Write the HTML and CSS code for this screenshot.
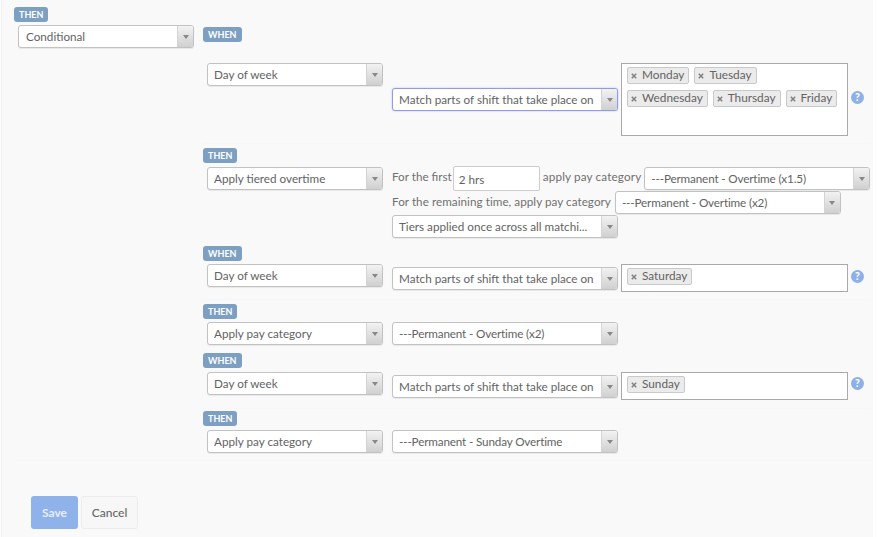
FILE: index.html
```html
<!DOCTYPE html>
<html lang="en">
<head>
<meta charset="utf-8">
<title>Rule editor</title>
<link rel="stylesheet" href="styles.css">
</head>
<body>
<main class="page">
  <div class="tree">
    <div class="root-col">
      <span class="tag tag-root">THEN</span>
      <div class="select w-root"><span class="select-text">Conditional</span><span class="select-btn"><i class="caret"></i></span></div>
    </div>
    <div class="branches">
      <span class="tag tag-first">WHEN</span>

      <div class="row row-1">
        <div class="select w-field"><span class="select-text">Day of week</span><span class="select-btn"><i class="caret"></i></span></div>
        <div class="select w-value focused mid-1"><span class="select-text">Match parts of shift that take place on</span><span class="select-btn"><i class="caret"></i></span></div>
        <div class="tagbox tall">
          <div class="chip-line">
            <span class="chip"><svg class="x" viewBox="0 0 6 6"><path d="M.8.8l4.4 4.4M5.200.8L.8 5.200"/></svg>Monday</span>
            <span class="chip"><svg class="x" viewBox="0 0 6 6"><path d="M.8.8l4.4 4.4M5.200.8L.8 5.200"/></svg>Tuesday</span>
          </div>
          <div class="chip-line">
            <span class="chip"><svg class="x" viewBox="0 0 6 6"><path d="M.8.8l4.4 4.4M5.200.8L.8 5.200"/></svg>Wednesday</span>
            <span class="chip"><svg class="x" viewBox="0 0 6 6"><path d="M.8.8l4.4 4.4M5.200.8L.8 5.200"/></svg>Thursday</span>
            <span class="chip"><svg class="x" viewBox="0 0 6 6"><path d="M.8.8l4.4 4.4M5.200.8L.8 5.200"/></svg>Friday</span>
          </div>
        </div>
        <span class="help help-1">?</span>
      </div>

      <hr class="sep sep-1">
      <span class="tag tag-then-1">THEN</span>
      <div class="row row-tier">
        <div class="select w-field"><span class="select-text">Apply tiered overtime</span><span class="select-btn"><i class="caret"></i></span></div>
        <div class="tier">
          <div class="tier-line line-1">
            <span class="lbl lbl-first">For the first</span>
            <span class="input">2 hrs</span>
            <span class="lbl lbl-apply">apply pay category</span>
            <div class="select w-value"><span class="select-text perm">---Permanent - Overtime (x1.5)</span><span class="select-btn"><i class="caret"></i></span></div>
          </div>
          <div class="tier-line line-2">
            <span class="lbl lbl-rest">For the remaining time, apply pay category</span>
            <div class="select w-value"><span class="select-text perm">---Permanent - Overtime (x2)</span><span class="select-btn"><i class="caret"></i></span></div>
          </div>
          <div class="select w-value"><span class="select-text">Tiers applied once across all matchi...</span><span class="select-btn"><i class="caret"></i></span></div>
        </div>
      </div>

      <span class="tag tag-when-2">WHEN</span>
      <div class="row">
        <div class="select w-field"><span class="select-text">Day of week</span><span class="select-btn"><i class="caret"></i></span></div>
        <div class="select w-value mid-2"><span class="select-text">Match parts of shift that take place on</span><span class="select-btn"><i class="caret"></i></span></div>
        <div class="tagbox"><span class="chip"><svg class="x" viewBox="0 0 6 6"><path d="M.8.8l4.4 4.4M5.200.8L.8 5.200"/></svg>Saturday</span></div>
        <span class="help help-2">?</span>
      </div>

      <hr class="sep sep-1">
      <span class="tag tag-then-2">THEN</span>
      <div class="row">
        <div class="select w-field"><span class="select-text">Apply pay category</span><span class="select-btn"><i class="caret"></i></span></div>
        <div class="select w-value"><span class="select-text perm">---Permanent - Overtime (x2)</span><span class="select-btn"><i class="caret"></i></span></div>
      </div>

      <span class="tag tag-when-3">WHEN</span>
      <div class="row">
        <div class="select w-field"><span class="select-text">Day of week</span><span class="select-btn"><i class="caret"></i></span></div>
        <div class="select w-value mid-2"><span class="select-text">Match parts of shift that take place on</span><span class="select-btn"><i class="caret"></i></span></div>
        <div class="tagbox"><span class="chip"><svg class="x" viewBox="0 0 6 6"><path d="M.8.8l4.4 4.4M5.200.8L.8 5.200"/></svg>Sunday</span></div>
        <span class="help help-3">?</span>
      </div>

      <hr class="sep sep-3">
      <span class="tag tag-then-3">THEN</span>
      <div class="row">
        <div class="select w-field"><span class="select-text">Apply pay category</span><span class="select-btn"><i class="caret"></i></span></div>
        <div class="select w-value"><span class="select-text perm">---Permanent - Sunday Overtime</span><span class="select-btn"><i class="caret"></i></span></div>
      </div>
    </div>
  </div>
  <div class="actions">
    <button class="btn btn-save" type="button">Save</button>
    <button class="btn btn-cancel" type="button">Cancel</button>
  </div>
</main>
</body>
</html>
```
FILE: styles.css
```css
* { box-sizing: border-box; }
html, body { margin: 0; height: 100%; }
body {
  background: #fff;
  color: #636363;
  font-family: Lato, "Liberation Sans", sans-serif;
  font-size: 11.7px;
  overflow: hidden;
}
.page {
  height: 537px;
  margin-left: 1px;
  margin-right: 5px;
  background: #f9f9f9;
  border-left: 1px solid #f0f0f0;
  padding: 7px 0 0 12px;
}
.tree { display: flex; padding-bottom: 7px; border-bottom: 1px solid #f7f7f7; }
.root-col { width: 189px; flex: none; }
.branches { padding-top: 20px; display: flex; flex-direction: column; align-items: flex-start; }

.sep { align-self: stretch; height: 1px; margin: 0; border: 0; background: #f7f7f7; }
.sep-1 { margin-top: 7px; }
.sep-3 { margin-top: 8px; }

.tag {
  display: block;
  width: max-content;
  height: 15px;
  padding: 0 5px;
  border-radius: 3px;
  background: #7c9fc2;
  color: #fff;
  font-size: 9px;
  font-weight: 700;
  line-height: 15px;
}
.tag-root { margin-bottom: 3px; }
.tag-first { margin-bottom: 21px; }
.tag-then-1 { margin-top: 4px; margin-bottom: 3px; }
.tag-when-2 { margin-top: 8px; margin-bottom: 3px; }
.tag-then-2 { margin-top: 4px; margin-bottom: 3px; }
.tag-when-3 { margin-top: 8px; margin-bottom: 4px; }
.tag-then-3 { margin-top: 2px; margin-bottom: 4px; }

.row { display: flex; align-items: flex-start; margin-left: 4px; }
.row-1 { height: 73px; }
.row-tier .w-field { margin-top: 1px; }

.select {
  display: flex;
  height: 23px;
  flex: none;
  background: #fff;
  border: 1px solid #c2c2c2;
  border-radius: 3px;
  box-shadow: 0 1px 1px rgba(0, 0, 0, .07);
}
.select-text {
  flex: 1;
  padding-left: 6px;
  line-height: 21px;
  white-space: nowrap;
  overflow: hidden;
}
.perm { letter-spacing: -.15px; }
.select-btn {
  width: 16px;
  flex: none;
  display: flex;
  align-items: center;
  justify-content: center;
  border-left: 1px solid #d4d4d4;
  background: linear-gradient(#f2f2f2, #d0d0d0);
  border-radius: 0 2px 2px 0;
}
.caret {
  width: 0;
  height: 0;
  border-left: 3px solid transparent;
  border-right: 3px solid transparent;
  border-top: 4px solid #888;
}
.w-root { width: 176px; margin-left: 4px; }
.w-root .select-text { padding-left: 7px; }
.w-field { width: 176px; margin-right: 9px; }
.w-value { width: 226px; }
.focused { border-color: #8f9be8; box-shadow: 0 0 2px #b3bbf0; }
.mid-1 { margin-top: 25px; margin-right: 3px; }
.mid-2 { margin-top: 3px; margin-right: 3px; }

.tagbox {
  width: 227px;
  height: 28px;
  flex: none;
  background: #fff;
  border: 1px solid #a9a9a9;
  padding: 3px 0 0 5px;
  display: flex;
  align-items: flex-start;
}
.tall { height: 73px; flex-direction: column; gap: 6px; }
.chip-line { display: flex; gap: 5px; }
.chip {
  height: 17px;
  padding: 0 4px 2px 3px;
  background: #ebebeb;
  border: 1px solid #c9c9c9;
  border-radius: 2px;
  font-size: 11.8px;
  line-height: 14px;
  display: inline-flex;
  align-items: center;
}
.x {
  width: 6px;
  height: 6px;
  margin-top: 2px;
  margin-right: 5px;
  fill: none;
  stroke: #808080;
  stroke-width: 1.5;
  flex: none;
}
.help {
  width: 13px;
  height: 13px;
  margin-left: 3px;
  border-radius: 50%;
  background: #8cb0e8;
  color: #fff;
  font-size: 10.5px;
  font-weight: 900;
  line-height: 13px;
  text-align: center;
  flex: none;
}
.help-1 { margin-top: 28px; }
.help-2 { margin-top: 6px; }
.help-3 { margin-top: 5px; }

.tier { display: flex; flex-direction: column; align-items: flex-start; }
.tier-line { display: flex; align-items: flex-start; }
.line-1 { height: 25px; }
.line-2 { height: 24px; }
.lbl { white-space: nowrap; line-height: 21px; color: #707070; margin-right: 3px; }
.lbl-first { margin-right: 1px; }
.lbl-apply { letter-spacing: .15px; }
.lbl-rest { letter-spacing: .04px; margin-right: 4px; }
.tier-line .select { margin-top: 1px; }
.line-2 .select { margin-top: 0; }
.input {
  width: 87px;
  height: 25px;
  background: #fff;
  border: 1px solid #ccc;
  border-radius: 2px;
  padding-left: 5px;
  line-height: 24px;
  margin-right: 3px;
}

.actions { display: flex; gap: 3px; margin-top: 35px; padding-left: 17px; }
.btn {
  width: 57px;
  height: 33px;
  border-radius: 3px;
  font: 700 12px Lato, "Liberation Sans", sans-serif;
  padding: 0;
}
.btn-save { width: 47px; background: #8fb2ea; border: 0; color: #e8effb; }
.btn-cancel { background: #f7f7f7; border: 1px solid #ececec; color: #666; font-weight: 500; }
```
